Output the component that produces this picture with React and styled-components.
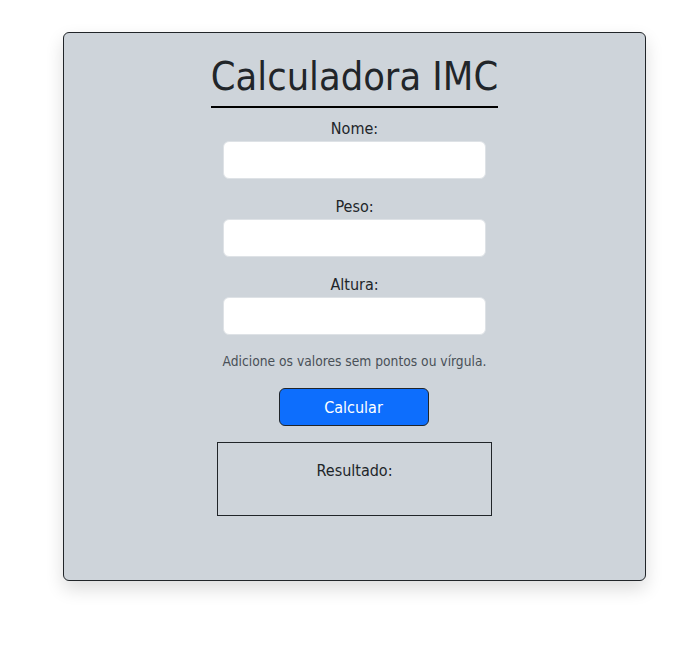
import React from "react";
import styled, { createGlobalStyle } from "styled-components";

const Global = createGlobalStyle`
  html, body { margin: 0; padding: 0; background: #ffffff; }
  body { font-family: "DejaVu Sans Condensed", "DejaVu Sans", sans-serif; color: #212529; }
  * { box-sizing: border-box; }
`;

const Page = styled.div`
  padding: 32px 50px 40px 63px;
`;

const Card = styled.main`
  height: 549px;
  background: #ced4da;
  border: 1px solid #212529;
  border-radius: 6px;
  box-shadow: 0 8px 18px rgba(0, 0, 0, 0.14);
  display: flex;
  flex-direction: column;
  align-items: center;
  padding-top: 19px;
`;

const Title = styled.h1`
  margin: 0 0 9px;
  font-size: 39.4px;
  font-weight: 400;
  line-height: 48px;
  padding-bottom: 6px;
  border-bottom: 2px solid #000;
  color: #212529;
`;

const Form = styled.form`
  display: flex;
  flex-direction: column;
  align-items: center;
  gap: 16px;
`;

const Field = styled.div`
  display: flex;
  flex-direction: column;
  align-items: center;
`;

const Label = styled.label`
  font-size: 16px;
  line-height: 24px;
`;

const Input = styled.input`
  width: 263px;
  height: 38px;
  background: #fff;
  border: 1px solid #dee2e6;
  border-radius: 6px;
  font: inherit;
  padding: 6px 12px;
`;

const Hint = styled.p`
  margin: 0;
  font-size: 13.7px;
  line-height: 21px;
  color: #495057;
`;

const Button = styled.button`
  width: 150px;
  height: 38px;
  margin-right: 2px;
  background: #0d6efd;
  color: #fff;
  border: 1px solid #212529;
  border-radius: 6px;
  font: inherit;
  font-size: 16px;
`;

const Result = styled.div`
  width: 275px;
  height: 74px;
  border: 1px solid #212529;
  padding-top: 16px;
  text-align: center;
  font-size: 16px;
  line-height: 24px;
`;

export default function App() {
  return (
    <>
      <Global />
      <Page>
        <Card>
          <Title>Calculadora IMC</Title>
          <Form onSubmit={(e) => e.preventDefault()}>
            <Field>
              <Label htmlFor="nome">Nome:</Label>
              <Input id="nome" type="text" />
            </Field>
            <Field>
              <Label htmlFor="peso">Peso:</Label>
              <Input id="peso" type="text" />
            </Field>
            <Field>
              <Label htmlFor="altura">Altura:</Label>
              <Input id="altura" type="text" />
            </Field>
            <Hint>Adicione os valores sem pontos ou vírgula.</Hint>
            <Button type="submit">Calcular</Button>
            <Result>Resultado:</Result>
          </Form>
        </Card>
      </Page>
    </>
  );
}
